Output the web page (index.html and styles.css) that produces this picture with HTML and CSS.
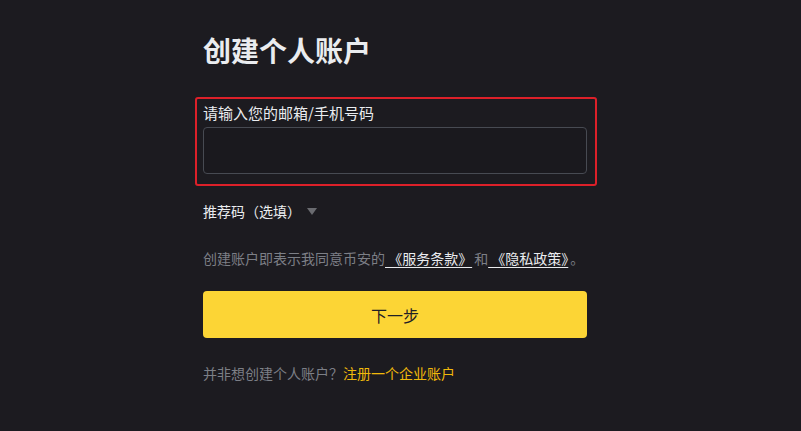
FILE: index.html
```html
<!DOCTYPE html>
<html lang="zh-CN">
<head>
<meta charset="utf-8">
<title>创建个人账户</title>
<link rel="stylesheet" href="styles.css">
</head>
<body>
<main class="page">
  <section class="form">
    <h1 class="title">创建个人账户</h1>
    <div class="highlight">
      <label class="field-label" for="account">请输入您的邮箱/手机号码</label>
      <input class="field-input" id="account" type="text">
    </div>
    <div class="referral">
      <span>推荐码（选填）</span>
      <span class="caret"></span>
    </div>
    <p class="terms">创建账户即表示我同意币安的<a class="link" href="#"> 《服务条款》</a>和<a class="link" href="#"> 《隐私政策》</a>。</p>
    <button class="next" type="button">下一步</button>
    <p class="alt">并非想创建个人账户？<a class="alt-link" href="#">注册一个企业账户</a></p>
  </section>
</main>
</body>
</html>
```
FILE: styles.css
```css
html, body {
  margin: 0;
  padding: 0;
  background: #1c1b20;
  height: 100%;
}
body {
  font-family: "Noto Sans CJK SC", "Noto Sans", "Liberation Sans", sans-serif;
  color: #eaecef;
}
.page {
  display: flex;
  padding-left: 203px;
}
.form {
  width: 384px;
  display: flex;
  flex-direction: column;
  padding-top: 32px;
}
.title {
  margin: 0;
  font-size: 28px;
  line-height: 36px;
  font-weight: 700;
  color: #eaecef;
}
.highlight {
  margin: 29px -10px 0 -8px;
  padding: 4px 8px 10px 6px;
  border: 2px solid #dc2029;
  border-radius: 3px;
  display: flex;
  flex-direction: column;
}
.field-label {
  font-size: 15px;
  line-height: 20px;
  color: #eaecef;
}
.field-input {
  margin-top: 4px;
  height: 47px;
  box-sizing: border-box;
  border: 1px solid #474a52;
  border-radius: 4px;
  background: #1a191e;
  outline: none;
}
.referral {
  margin-top: 14px;
  display: flex;
  align-items: center;
  font-size: 14px;
  line-height: 22px;
  color: #eaecef;
}
.caret {
  margin-left: 6px;
  width: 0;
  height: 0;
  border-left: 5px solid transparent;
  border-right: 5px solid transparent;
  border-top: 7px solid #6a6b70;
}
.terms {
  margin: 25px 0 0;
  font-size: 14px;
  line-height: 22px;
  color: #7c7f86;
  white-space: nowrap;
}
.link {
  color: #eaecef;
  text-decoration: underline;
  text-underline-offset: 3px;
  margin-right: 2px;
}
.next {
  margin-top: 22px;
  height: 47px;
  border: none;
  border-radius: 4px;
  background: #fcd535;
  color: #1e2026;
  font-family: inherit;
  font-size: 16px;
  cursor: pointer;
}
.alt {
  margin: 24px 0 0;
  font-size: 14px;
  line-height: 22px;
  color: #7c7f86;
}
.alt-link {
  color: #f0b90b;
  text-decoration: none;
}
```
